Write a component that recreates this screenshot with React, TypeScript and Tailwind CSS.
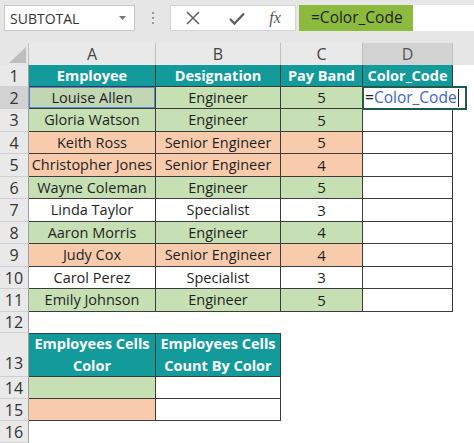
import React from "react";

const TEAL = "bg-[#139b9b]";

type Row = { n: number; h: string; a: string; b: string; c: string; color: "g" | "o" | "w" };

const rows: Row[] = [
  { n: 2, h: "h-[22px]", a: "Louise Allen", b: "Engineer", c: "5", color: "g" },
  { n: 3, h: "h-[23px]", a: "Gloria Watson", b: "Engineer", c: "5", color: "g" },
  { n: 4, h: "h-[22px]", a: "Keith Ross", b: "Senior Engineer", c: "5", color: "o" },
  { n: 5, h: "h-[23px]", a: "Christopher Jones", b: "Senior Engineer", c: "4", color: "o" },
  { n: 6, h: "h-[22px]", a: "Wayne Coleman", b: "Engineer", c: "5", color: "g" },
  { n: 7, h: "h-[23px]", a: "Linda Taylor", b: "Specialist", c: "3", color: "w" },
  { n: 8, h: "h-[22px]", a: "Aaron Morris", b: "Engineer", c: "4", color: "g" },
  { n: 9, h: "h-[23px]", a: "Judy Cox", b: "Senior Engineer", c: "4", color: "o" },
  { n: 10, h: "h-[22px]", a: "Carol Perez", b: "Specialist", c: "3", color: "w" },
  { n: 11, h: "h-[23px]", a: "Emily Johnson", b: "Engineer", c: "5", color: "g" },
];

const fill = (c: "g" | "o" | "w") =>
  c === "g" ? "bg-[#c6e0b4]" : c === "o" ? "bg-[#f8cbad]" : "bg-white";

function RowHead({ n, active, extra }: { n: number | string; active?: boolean; extra?: string }) {
  return (
    <div
      className={`w-[29px] shrink-0 flex justify-center border-r border-r-[#9e9e9e] border-b border-b-[#d0d0d0] text-[16px] text-[#333] ${
        active ? "bg-[#d2d2d2]" : "bg-[#e9e9e9]"
      } ${extra ?? "items-center"}`}
    >
      {n}
    </div>
  );
}

const cellBase = "shrink-0 flex items-center justify-center border-r border-b border-[#3c3c3c] whitespace-nowrap";

export default function App() {
  return (
    <div
      className="w-[474px] h-[443px] overflow-hidden bg-white text-[#1f1f1f]"
      style={{ fontFamily: '"Open Sans", "Noto Sans", sans-serif' }}
    >
      {/* formula bar */}
      <div className="h-[43px] bg-[#e6e6e6] flex items-start pt-[5px] pl-[4px] gap-0">
        <div className="w-[131px] h-[26px] bg-white border border-[#c8c8c8] flex items-center pl-[5px] pr-[8px] justify-between">
          <span className="text-[14px] text-[#333]">SUBTOTAL</span>
          <svg width="7" height="4" viewBox="0 0 7 4">
            <path d="M0 0 L7 0 L3.5 4 Z" fill="#777" />
          </svg>
        </div>
        <div className="w-[35px] h-[26px] flex items-center justify-center">
          <div className="flex flex-col gap-[3px]">
            <div className="w-[2px] h-[2px] bg-[#9a9a9a]" />
            <div className="w-[2px] h-[2px] bg-[#9a9a9a]" />
            <div className="w-[2px] h-[2px] bg-[#9a9a9a]" />
          </div>
        </div>
        <div className="w-[126px] h-[26px] bg-white border border-[#d4d4d4] flex items-center">
          <div className="w-[40px] flex justify-center pl-[4px]">
            <svg width="14" height="14" viewBox="0 0 14 14">
              <path d="M1 1 L13 13 M13 1 L1 13" stroke="#606060" strokeWidth="1.5" />
            </svg>
          </div>
          <div className="w-[46px] flex justify-center pl-[6px]">
            <svg width="16" height="13" viewBox="0 0 16 13">
              <path d="M1 7 L5.5 11.5 L15 1.5" stroke="#606060" strokeWidth="2.4" fill="none" />
            </svg>
          </div>
          <div
            className="w-[36px] flex justify-center italic text-[16px] text-[#555]"
            style={{ fontFamily: '"Liberation Serif", serif' }}
          >
            fx
          </div>
        </div>
        <div className="ml-[3px] h-[26px] flex-1 bg-white flex">
          <div className="w-[114px] h-full bg-[#8cba3c] flex items-center pl-[12px] text-[15.5px] text-[#1f1f1f]">
            =Color_Code
          </div>
        </div>
      </div>

      {/* column headers */}
      <div className="flex h-[22px] bg-[#e6e6e6] text-[16px] text-[#444]">
        <div className="w-[29px] shrink-0 relative border-r border-[#c0c0c0]">
          <svg className="absolute right-[2px] bottom-[2px]" width="17" height="16" viewBox="0 0 17 16">
            <path d="M17 0 L17 16 L0 16 Z" fill="#bdbdbd" />
          </svg>
        </div>
        <div className="w-[127px] shrink-0 flex items-center justify-center border-r border-[#c0c0c0] bg-[#e9e9e9]">A</div>
        <div className="w-[125px] shrink-0 flex items-center justify-center border-r border-[#c0c0c0] bg-[#e9e9e9]">B</div>
        <div className="w-[82px] shrink-0 flex items-center justify-center border-r border-[#c0c0c0] bg-[#e9e9e9]">C</div>
        <div className="w-[90px] shrink-0 flex items-center justify-center border-r border-[#c0c0c0] bg-[#d2d2d2] text-[#555]">D</div>
        <div className="flex-1 bg-[#e6e6e6]" />
      </div>

      {/* row 1 header */}
      <div className="flex h-[22px]">
        <RowHead n={1} />
        <div className={`${cellBase} ${TEAL} w-[127px] text-white font-bold text-[14.5px]`}>Employee</div>
        <div className={`${cellBase} ${TEAL} w-[125px] text-white font-bold text-[14.5px]`}>Designation</div>
        <div className={`${cellBase} ${TEAL} w-[82px] text-white font-bold text-[14.5px]`}>Pay Band</div>
        <div className={`${cellBase} ${TEAL} w-[90px] text-white font-bold text-[14.5px]`}>Color_Code</div>
        <div className="flex-1" />
      </div>

      {rows.map((r) => (
        <div key={r.n} className={`flex ${r.h}`}>
          <RowHead n={r.n} active={r.n === 2} />
          <div className={`${cellBase} ${fill(r.color)} w-[127px] text-[14.5px] relative`}>
            {r.n === 2 && (
              <div className="absolute inset-0 border-[1.5px] border-[#5b86d3] bg-[#c1d6b3] flex items-center justify-center">
                {r.a}
              </div>
            )}
            {r.n !== 2 && r.a}
          </div>
          <div className={`${cellBase} ${fill(r.color)} w-[125px] text-[14.5px]`}>{r.b}</div>
          <div className={`${cellBase} ${fill(r.color)} w-[82px] text-[15px]`}>{r.c}</div>
          <div className={`${cellBase} bg-white w-[90px] relative`}>
            {r.n === 2 && (
              <div className="absolute left-[-1px] top-[-1px] w-[105px] h-[24px] border-2 border-[#1e5b4c] bg-white flex items-center pl-[1px] z-10 text-[15.5px]">
                <span className="text-[#1f1f1f]">=</span>
                <span className="text-[#3e64c8]">Color_Code</span>
                <span className="ml-[1px] w-[1px] h-[18px] bg-[#222]" />
              </div>
            )}
          </div>
          <div className="flex-1" />
        </div>
      ))}

      {/* row 12 */}
      <div className="flex h-[21px]">
        <RowHead n={12} />
        <div className="flex-1" />
      </div>

      {/* row 13 */}
      <div className="flex h-[44px]">
        <RowHead n={13} extra="items-end pb-[1px]" />
        <div className={`${cellBase} ${TEAL} w-[127px] border-t border-t-[#3c3c3c] flex-col text-white font-bold text-[14.5px] leading-[22px]`}>
          <span>Employees Cells</span>
          <span>Color</span>
        </div>
        <div className={`${cellBase} ${TEAL} w-[125px] border-t border-t-[#3c3c3c] flex-col text-white font-bold text-[14.5px] leading-[22px]`}>
          <span>Employees Cells</span>
          <span>Count By Color</span>
        </div>
        <div className="flex-1" />
      </div>

      <div className="flex h-[22px]">
        <RowHead n={14} />
        <div className={`${cellBase} bg-[#c6e0b4] w-[127px]`} />
        <div className={`${cellBase} bg-white w-[125px]`} />
        <div className="flex-1" />
      </div>
      <div className="flex h-[22px]">
        <RowHead n={15} />
        <div className={`${cellBase} bg-[#f8cbad] w-[127px]`} />
        <div className={`${cellBase} bg-white w-[125px]`} />
        <div className="flex-1" />
      </div>
      <div className="flex h-[22px]">
        <RowHead n={16} />
        <div className="flex-1" />
      </div>
    </div>
  );
}
